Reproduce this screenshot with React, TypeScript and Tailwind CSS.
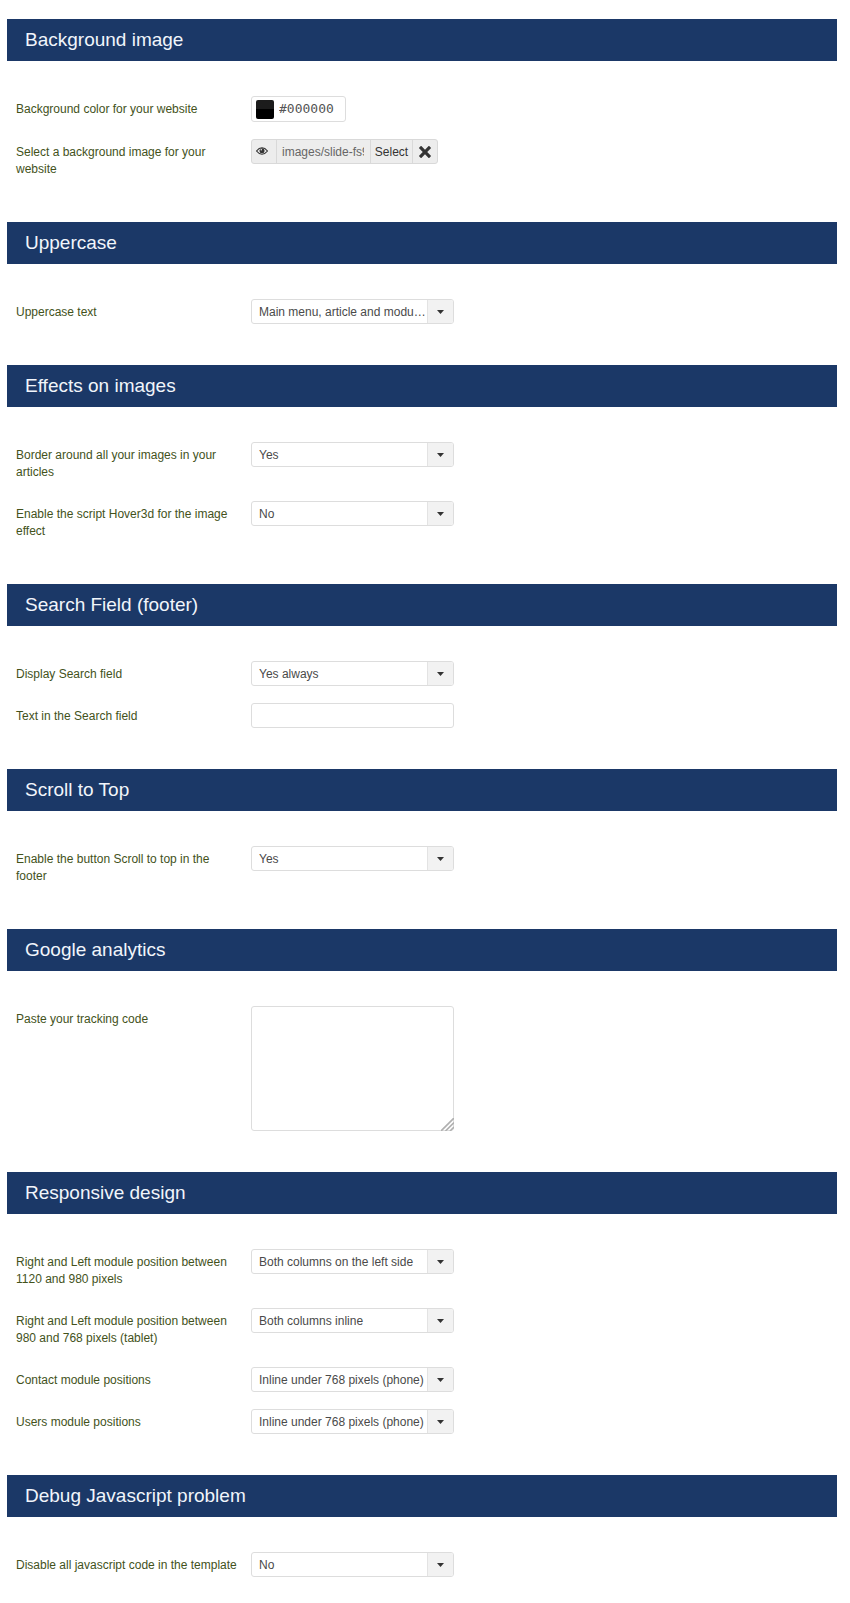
import { useId, useState } from 'react';
import type { ReactNode } from 'react';
import { ImCross } from 'react-icons/im';

interface SectionProps {
  title: string;
  children: ReactNode;
}

function Section({ title, children }: SectionProps) {
  return (
    <section>
      <h2 className="flex h-[42px] items-center bg-[#1b3867] px-[18px] pt-px text-[19px] text-[#f1f5fb]">{title}</h2>
      <div className="mt-[35px] flex flex-col gap-[17px] pl-[9px]">{children}</div>
    </section>
  );
}

interface RowProps {
  id: string;
  label: string;
  children: ReactNode;
}

function Row({ id, label, children }: RowProps) {
  return (
    <div className="flex items-start">
      <div className="w-[235px] shrink-0 pt-[5px] pb-[3px] text-xs leading-[17px] text-[#43521b]">
        <label htmlFor={id} className="block max-w-[226px]">{label}</label>
      </div>
      {children}
    </div>
  );
}

interface SelectRowProps {
  label: string;
  options: string[];
}

function SelectRow({ label, options }: SelectRowProps) {
  const id = useId();

  return (
    <Row id={id} label={label}>
      <div className="relative">
        <select id={id} className="block h-[25px] w-[203px] appearance-none overflow-hidden rounded-[3px] border border-[#dddddd] bg-white pr-[26px] pl-[7px] text-xs text-ellipsis whitespace-nowrap text-[#4a4a4a] outline-none">
          {options.map((option) => (
            <option key={option}>{option}</option>
          ))}
        </select>
        <span className="pointer-events-none absolute inset-y-px right-px flex w-[26px] items-center justify-center rounded-r-[2px] border-l border-[#e3e3e3] bg-[#f2f2f2]">
          <svg width="7" height="4" viewBox="0 0 7 4" fill="#333333">
            <path d="M0 0h7L3.500 4z" />
          </svg>
        </span>
      </div>
    </Row>
  );
}

function ColorRow() {
  const [color, setColor] = useState('#000000');

  return (
    <Row id="background-color" label="Background color for your website">
      <div className="flex h-[26px] w-[95px] items-center gap-[5px] rounded-[3px] border border-[#dddddd] bg-white pl-1">
        <span className="h-[19px] w-[18px] shrink-0 rounded-[2px] bg-linear-to-b from-[#1c1c1c] from-50% to-black to-50%" />
        <input id="background-color" value={color} onChange={(e) => setColor(e.target.value)} className="w-full min-w-0 font-['DejaVu_Sans_Mono',monospace] text-[13px] text-[#555555] outline-none" />
      </div>
    </Row>
  );
}

function MediaRow() {
  return (
    <Row id="background-image" label="Select a background image for your website">
      <div className="flex h-[25px] divide-x divide-[#d9d9d9] rounded-[3px] border border-[#d9d9d9] bg-[#ededed] text-xs text-[#333333]">
        <button type="button" aria-label="Preview" className="flex w-[25px] items-center justify-center pr-1 pb-px">
          <svg width="12" height="8" viewBox="0 0 24 16">
            <path d="M1 8C5 3 8.500 1.500 12 1.500S19 3 23 8c-4 5-7.500 6.500-11 6.500S5 13 1 8z" fill="none" stroke="#333333" strokeWidth="2.400" />
            <circle cx="12" cy="7.500" r="5" fill="#333333" />
            <circle cx="10.500" cy="5.500" r="1.600" fill="#ededed" />
          </svg>
        </button>
        <div className="w-[94px] pr-[6px] pl-[5px]">
          <input id="background-image" readOnly defaultValue="images/slide-fs9.jpg" className="block h-full w-full text-[#666666] outline-none" />
        </div>
        <button type="button" className="w-[42px]">Select</button>
        <button type="button" aria-label="Clear" className="flex w-[24px] items-center justify-center">
          <ImCross className="h-3 w-3" />
        </button>
      </div>
    </Row>
  );
}

function TrackingRow() {
  return (
    <Row id="tracking-code" label="Paste your tracking code">
      <div className="relative">
        <textarea id="tracking-code" className="block h-[125px] w-[203px] resize-none rounded-[3px] border border-[#dddddd] bg-white p-1 text-xs text-[#4a4a4a] outline-none" />
        <svg width="13" height="13" viewBox="0 0 13 13" className="pointer-events-none absolute right-0 bottom-0" stroke="#b0b0b0" strokeWidth="1.600">
          <path d="M0 13L13 0M4.500 13L13 4.500M9 13l4-4" />
        </svg>
      </div>
    </Row>
  );
}

export default function App() {
  return (
    <main className="flex flex-col gap-[41px] bg-white pt-[19px] pr-[13px] pb-[26px] pl-[7px] font-['Liberation_Sans',Arial,sans-serif]">
      <Section title="Background image">
        <ColorRow />
        <MediaRow />
      </Section>

      <Section title="Uppercase">
        <SelectRow label="Uppercase text" options={['Main menu, article and module titles', 'None']} />
      </Section>

      <Section title="Effects on images">
        <SelectRow label="Border around all your images in your articles" options={['Yes', 'No']} />
        <SelectRow label="Enable the script Hover3d for the image effect" options={['No', 'Yes']} />
      </Section>

      <Section title="Search Field (footer)">
        <SelectRow label="Display Search field" options={['Yes always', 'No']} />
        <Row id="search-text" label="Text in the Search field">
          <input id="search-text" className="h-[25px] w-[203px] rounded-[3px] border border-[#dddddd] bg-white px-[7px] text-xs text-[#4a4a4a] outline-none" />
        </Row>
      </Section>

      <Section title="Scroll to Top">
        <SelectRow label="Enable the button Scroll to top in the footer" options={['Yes', 'No']} />
      </Section>

      <Section title="Google analytics">
        <TrackingRow />
      </Section>

      <Section title="Responsive design">
        <SelectRow label="Right and Left module position between 1120 and 980 pixels" options={['Both columns on the left side', 'Both columns inline']} />
        <SelectRow label="Right and Left module position between 980 and 768 pixels (tablet)" options={['Both columns inline', 'Both columns on the left side']} />
        <SelectRow label="Contact module positions" options={['Inline under 768 pixels (phone)']} />
        <SelectRow label="Users module positions" options={['Inline under 768 pixels (phone)']} />
      </Section>

      <Section title="Debug Javascript problem">
        <SelectRow label="Disable all javascript code in the template" options={['No', 'Yes']} />
      </Section>
    </main>
  );
}
